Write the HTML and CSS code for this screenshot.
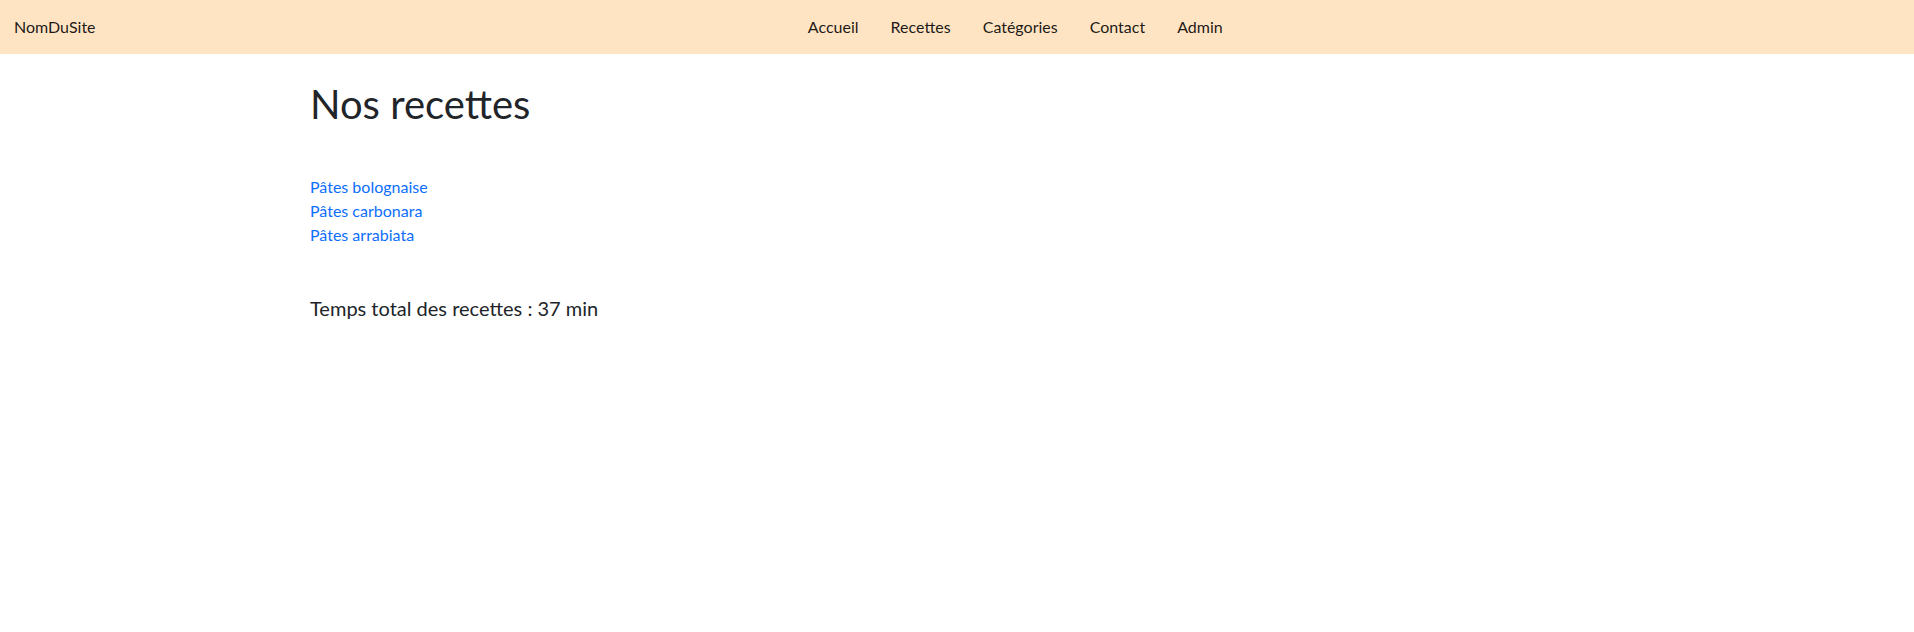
FILE: index.html
```html
<!DOCTYPE html>
<html lang="fr">
<head>
<meta charset="utf-8">
<title>Nos recettes</title>
<link rel="stylesheet" href="styles.css">
</head>
<body>
<nav class="navbar">
  <a class="brand" href="#">NomDuSite</a>
  <ul class="nav">
    <li><a class="nav-link" href="#">Accueil</a></li>
    <li><a class="nav-link" href="#">Recettes</a></li>
    <li><a class="nav-link" href="#">Catégories</a></li>
    <li><a class="nav-link" href="#">Contact</a></li>
    <li><a class="nav-link" href="#">Admin</a></li>
  </ul>
</nav>
<main class="container">
  <h1 class="title">Nos recettes</h1>
  <ul class="recipes">
    <li><a href="#">Pâtes bolognaise</a></li>
    <li><a href="#">Pâtes carbonara</a></li>
    <li><a href="#">Pâtes arrabiata</a></li>
  </ul>
  <p class="total">Temps total des recettes : 37 min</p>
</main>
</body>
</html>
```
FILE: styles.css
```css
* { box-sizing: border-box; }
body {
  margin: 0;
  font-family: Lato, "Noto Sans", sans-serif;
  font-size: 16px;
  line-height: 1.5;
  color: #212529;
  background: #fff;
}
a { text-decoration: none; }
.navbar {
  display: flex;
  align-items: center;
  height: 54px;
  padding: 0 12px;
  background: #ffe4c4;
}
.brand {
  color: rgba(0, 0, 0, 0.9);
  padding-left: 2px;
  margin-right: 33px;
}
.nav {
  flex: 1;
  display: flex;
  justify-content: center;
  list-style: none;
  margin: 0;
  padding: 0;
}
.nav-link {
  display: block;
  padding: 0 16px;
  color: rgba(0, 0, 0, 0.9);
}
.container {
  width: 1320px;
  margin: 0 auto;
  padding: 26px 12px 0 13px;
}
.title {
  margin: 0 0 47px;
  font-size: 40px;
  font-weight: 400;
  line-height: 1.2;
}
.recipes {
  list-style: none;
  margin: 0 0 46px;
  padding: 0;
}
.recipes a { color: #0d6efd; }
.total {
  margin: 0;
  font-size: 20px;
}
```
